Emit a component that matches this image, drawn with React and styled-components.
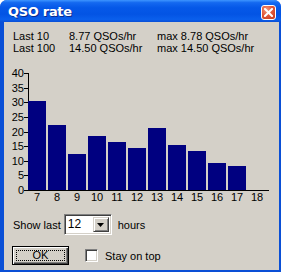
import React from "react";
import styled, { createGlobalStyle } from "styled-components";

const GlobalStyle = createGlobalStyle`
  html, body {
    margin: 0;
    padding: 0;
    background: #ffffff;
  }
  body {
    font-family: "Liberation Sans", Arial, sans-serif;
    font-size: 11px;
  }
`;

const hours = [7, 8, 9, 10, 11, 12, 13, 14, 15, 16, 17, 18];
const rates = [30.5, 22.2, 12.3, 18.5, 16.5, 14.5, 21.3, 15.4, 13.4, 9.2, 8.2, 0];

const Y0 = 130;
const SCALE = 117 / 40;

const RateChart = () => (
  <ChartSvg width="273" height="145" viewBox="0 0 273 145">
    {[0, 5, 10, 15, 20, 25, 30, 35, 40].map((v) => {
      const y = Y0 - v * SCALE;
      return (
        <g key={v}>
          <line x1="20" x2="25" y1={Math.round(y) + 0.5} y2={Math.round(y) + 0.5} stroke="#000" />
          <text x="20" y={Math.round(y) + 4} textAnchor="end">
            {v}
          </text>
        </g>
      );
    })}
    <line x1="24.5" x2="24.5" y1="13" y2={Y0} stroke="#000" />
    {rates.map((r, i) => {
      const h = Math.round(r * SCALE);
      return (
        <rect key={i} x={24 + 20 * i} y={Y0 - h} width="18" height={h} fill="#000080" />
      );
    })}
    <line x1="24" x2="265" y1={Y0 + 0.5} y2={Y0 + 0.5} stroke="#000" />
    {hours.map((hr, i) => (
      <text key={hr} x={33 + 20 * i} y="141" textAnchor="middle">
        {hr}
      </text>
    ))}
  </ChartSvg>
);

const App = () => {
  return (
    <>
      <GlobalStyle />
      <Window>
        <TitleBar>
          <Title>QSO rate</Title>
          <CloseButton>
            <svg width="9" height="9" viewBox="0 0 9 9">
              <path d="M1 1 L8 8 M8 1 L1 8" stroke="#fff" strokeWidth="2" strokeLinecap="square" />
            </svg>
          </CloseButton>
        </TitleBar>
        <Body>
          <Stats>
            <span>Last 10</span>
            <span>8.77 QSOs/hr</span>
            <span>max 8.78 QSOs/hr</span>
            <span>Last 100</span>
            <span>14.50 QSOs/hr</span>
            <span>max 14.50 QSOs/hr</span>
          </Stats>
          <RateChart />
          <ShowRow>
            <span>Show last</span>
            <Combo>
              <ComboValue>12</ComboValue>
              <ComboButton>
                <svg width="7" height="4" viewBox="0 0 7 4">
                  <path d="M0 0 H7 L3.5 4 Z" fill="#000" />
                </svg>
              </ComboButton>
            </Combo>
            <HoursLabel>hours</HoursLabel>
          </ShowRow>
          <ButtonRow>
            <OkButton>
              <FocusRect>OK</FocusRect>
            </OkButton>
            <CheckLabel>
              <CheckBox />
              <span>Stay on top</span>
            </CheckLabel>
          </ButtonRow>
        </Body>
      </Window>
    </>
  );
};

export default App;

const Window = styled.div`
  width: 281px;
  height: 272px;
  display: flex;
  flex-direction: column;
  background: #0a4fd6;
  border-radius: 7px 7px 0 0;
  overflow: hidden;
`;

const TitleBar = styled.div`
  height: 22px;
  flex: none;
  display: flex;
  align-items: center;
  justify-content: space-between;
  padding: 0 5px 0 8px;
  background: linear-gradient(
    to bottom,
    #3d95ff 0%,
    #1469f0 12%,
    #0558e8 35%,
    #0354e4 65%,
    #0a5fec 88%,
    #0a4fd6 100%
  );
`;

const Title = styled.span`
  color: #ffffff;
  font-family: "DejaVu Sans", "Liberation Sans", sans-serif;
  font-weight: bold;
  font-size: 13px;
  letter-spacing: -0.3px;
  text-shadow: 1px 1px 0 #0a2a8c;
  padding-top: 1px;
`;

const CloseButton = styled.div`
  width: 13px;
  height: 13px;
  margin-top: 2px;
  display: flex;
  align-items: center;
  justify-content: center;
  border: 1px solid #ffffff;
  border-radius: 3px;
  background: radial-gradient(circle at 35% 30%, #f39a7c 0%, #e2593a 45%, #c43a1c 100%);
`;

const Body = styled.div`
  flex: 1;
  display: flex;
  flex-direction: column;
  margin: 0 2px 2px 4px;
  background: #d4d0c8;
  padding-top: 8px;
  color: #000;
`;

const Stats = styled.div`
  display: grid;
  grid-template-columns: 56px 88px auto;
  line-height: 12px;
  padding-left: 9px;
`;

const ChartSvg = styled.svg`
  display: block;
  margin-top: 6px;
  shape-rendering: crispEdges;
  font-family: "Liberation Sans", Arial, sans-serif;
  font-size: 11px;
`;

const ShowRow = styled.div`
  display: flex;
  align-items: center;
  height: 21px;
  margin-top: 9px;
  padding-left: 9px;
`;

const Combo = styled.div`
  display: flex;
  width: 48px;
  height: 21px;
  box-sizing: border-box;
  margin-left: 3px;
  background: #ffffff;
  border-top: 1px solid #808080;
  border-left: 1px solid #808080;
  border-right: 1px solid #ffffff;
  border-bottom: 1px solid #ffffff;
  box-shadow: inset 1px 1px 0 #404040, inset -1px -1px 0 #d4d0c8;
  padding: 2px;
`;

const ComboValue = styled.span`
  flex: 1;
  font-size: 12px;
  line-height: 15px;
  padding-left: 1px;
`;

const ComboButton = styled.div`
  width: 16px;
  display: flex;
  align-items: center;
  justify-content: center;
  box-sizing: border-box;
  background: #d4d0c8;
  border-top: 1px solid #d4d0c8;
  border-left: 1px solid #d4d0c8;
  border-right: 1px solid #404040;
  border-bottom: 1px solid #404040;
  box-shadow: inset 1px 1px 0 #ffffff, inset -1px -1px 0 #808080;
`;

const HoursLabel = styled.span`
  margin-left: 6px;
`;

const ButtonRow = styled.div`
  display: flex;
  align-items: center;
  height: 19px;
  margin-top: 11px;
  padding-left: 8px;
`;

const OkButton = styled.div`
  width: 57px;
  height: 19px;
  box-sizing: border-box;
  border: 1px solid #000000;
  background: #d4d0c8;
  box-shadow: inset 1px 1px 0 #ffffff, inset -1px -1px 0 #404040, inset -2px -2px 0 #808080;
  padding: 3px;
  display: flex;
`;

const FocusRect = styled.div`
  flex: 1;
  border: 1px dotted #000;
  display: flex;
  align-items: center;
  justify-content: center;
  font-size: 11px;
  line-height: 11px;
`;

const CheckLabel = styled.label`
  display: flex;
  align-items: center;
  gap: 7px;
  margin-left: 16px;
`;

const CheckBox = styled.span`
  width: 13px;
  height: 13px;
  box-sizing: border-box;
  background: #ffffff;
  border-top: 1px solid #808080;
  border-left: 1px solid #808080;
  border-right: 1px solid #ffffff;
  border-bottom: 1px solid #ffffff;
  box-shadow: inset 1px 1px 0 #404040, inset -1px -1px 0 #d4d0c8;
`;
